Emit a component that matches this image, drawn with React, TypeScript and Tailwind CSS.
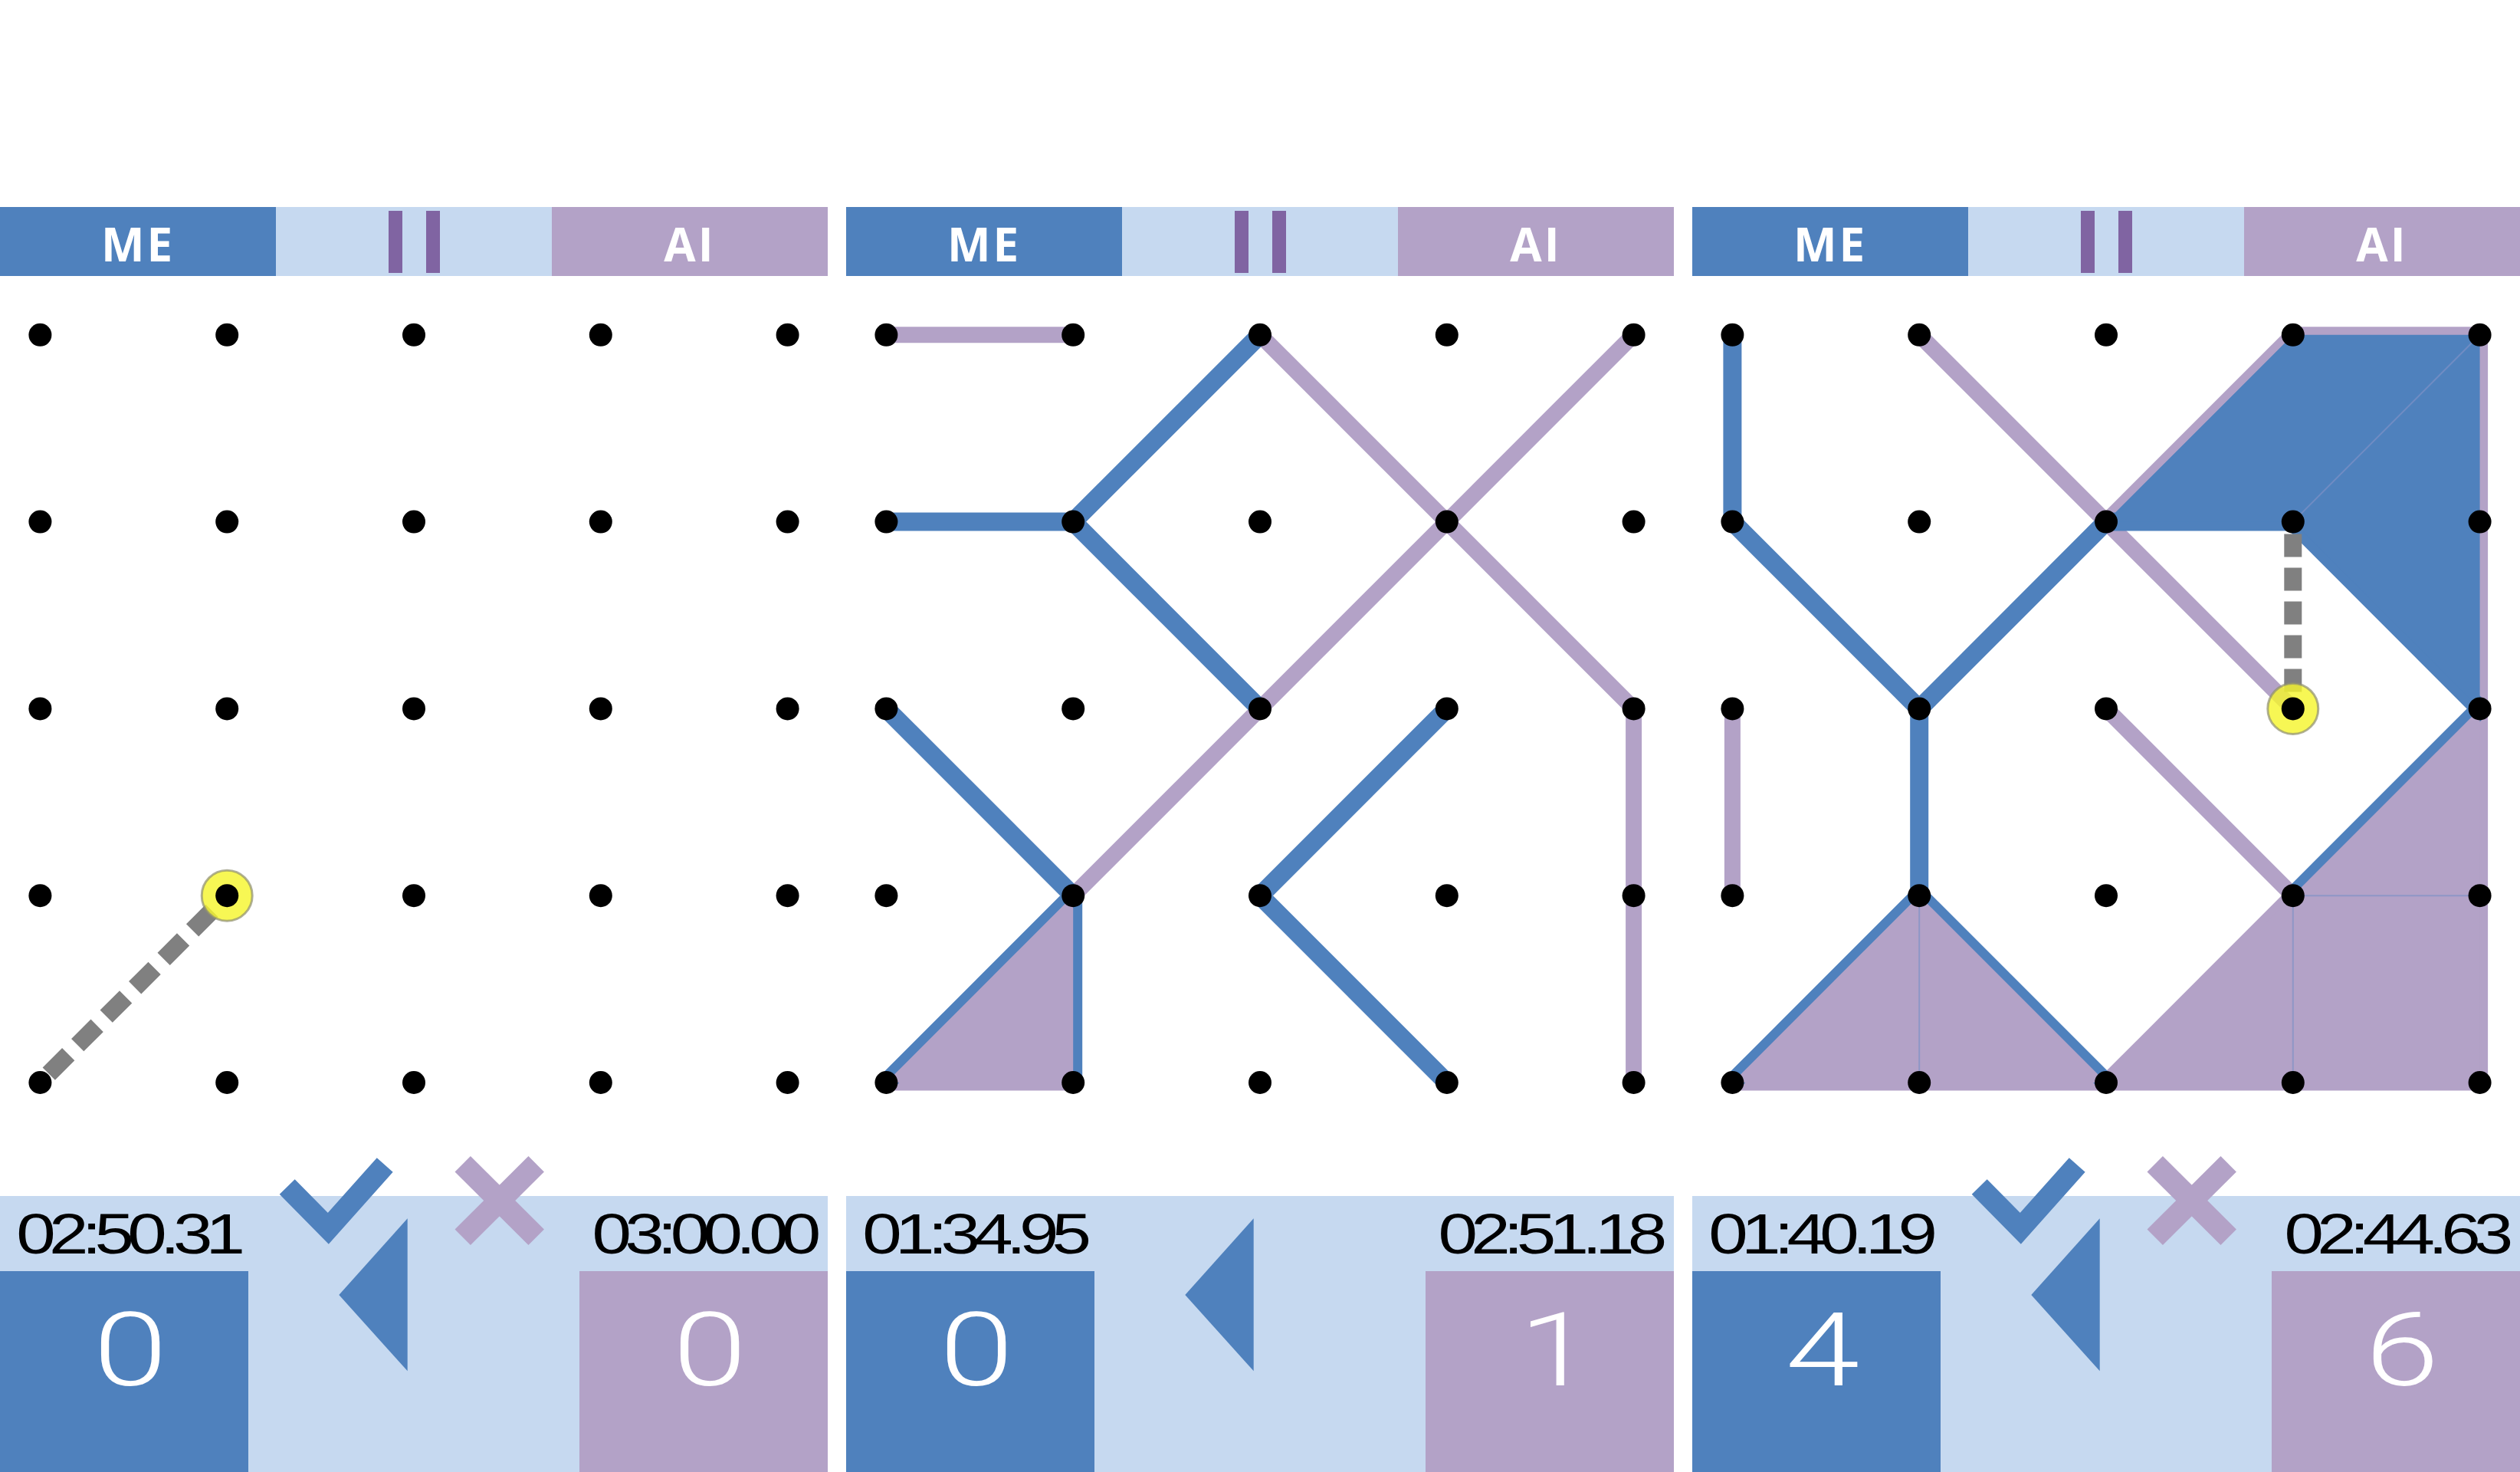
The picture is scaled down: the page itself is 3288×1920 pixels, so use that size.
import React from "react";

const BLUE = "#4f81bd";
const PURPLE = "#b3a2c7";

type Seg = [number, number, number, number];
type Pt = [number, number];

interface IBoard {
  purple: Seg[];
  blue: Seg[];
  fills: { pts: Pt[]; color: string }[];
  seams: Seg[];
  dash?: Seg;
  dashPattern?: string;
  mark?: Pt;
}

interface IPanel {
  board: IBoard;
  myTime: string;
  aiTime: string;
  myScore: number;
  aiScore: number;
  showActions: boolean;
}

const gx = (i: number) => 52.4 + 243.8 * i;
const gy = (j: number) => 76.8 + 243.8 * j;

const panels: IPanel[] = [
  {
    board: {
      purple: [],
      blue: [],
      fills: [],
      seams: [],
      dash: [0, 4, 1, 3],
      dashPattern: "36 17",
      mark: [1, 3],
    },
    myTime: "02:50.31",
    aiTime: "03:00.00",
    myScore: 0,
    aiScore: 0,
    showActions: true,
  },
  {
    board: {
      purple: [
        [0, 0, 1, 0],
        [2, 0, 3, 1],
        [3, 1, 4, 2],
        [4, 0, 3, 1],
        [3, 1, 2, 2],
        [2, 2, 1, 3],
        [4, 2, 4, 3],
        [4, 3, 4, 4],
        [0, 4, 1, 4],
      ],
      blue: [
        [0, 1, 1, 1],
        [1, 1, 2, 0],
        [1, 1, 2, 2],
        [0, 2, 1, 3],
        [1, 3, 0, 4],
        [1, 3, 1, 4],
        [3, 2, 2, 3],
        [2, 3, 3, 4],
      ],
      fills: [{ pts: [[0, 4], [1, 3], [1, 4]], color: PURPLE }],
      seams: [],
    },
    myTime: "01:34.95",
    aiTime: "02:51.18",
    myScore: 0,
    aiScore: 1,
    showActions: false,
  },
  {
    board: {
      purple: [
        [1, 0, 2, 1],
        [2, 1, 3, 2],
        [2, 1, 3, 0],
        [3, 0, 4, 0],
        [4, 0, 4, 2],
        [4, 2, 4, 4],
        [0, 2, 0, 3],
        [2, 2, 3, 3],
        [0, 4, 2, 4],
        [2, 4, 4, 4],
        [2, 4, 3, 3],
      ],
      blue: [
        [0, 0, 0, 1],
        [0, 1, 1, 2],
        [1, 2, 2, 1],
        [1, 2, 1, 3],
        [1, 3, 0, 4],
        [1, 3, 2, 4],
        [3, 3, 4, 2],
        [2, 1, 3, 1],
        [3, 1, 4, 2],
      ],
      fills: [
        { pts: [[2, 1], [3, 0], [4, 0], [4, 2], [3, 1]], color: BLUE },
        { pts: [[0, 4], [1, 3], [2, 4]], color: PURPLE },
        { pts: [[2, 4], [3, 3], [4, 2], [4, 4]], color: PURPLE },
      ],
      seams: [
        [3, 1, 4, 0],
        [1, 3, 1, 4],
        [3, 3, 4, 3],
        [3, 3, 3, 4],
      ],
      dash: [3, 1, 3, 2],
      dashPattern: "30 14",
      mark: [3, 2],
    },
    myTime: "01:40.19",
    aiTime: "02:44.63",
    myScore: 4,
    aiScore: 6,
    showActions: true,
  },
];

const Board = ({ board }: { board: IBoard }) => {
  const line = (s: Seg, color: string, width: number, key: string) => (
    <line
      key={key}
      x1={gx(s[0])}
      y1={gy(s[1])}
      x2={gx(s[2])}
      y2={gy(s[3])}
      stroke={color}
      strokeWidth={width}
    />
  );
  const dots = [];
  for (let j = 0; j < 5; j++) {
    for (let i = 0; i < 5; i++) {
      dots.push(<circle key={`d${i}-${j}`} cx={gx(i)} cy={gy(j)} r={15} fill="#000" />);
    }
  }
  return (
    <svg width="1080" height="1200" viewBox="0 0 1080 1200" className="block">
      {board.purple.map((s, i) => line(s, PURPLE, 21, `p${i}`))}
      {board.blue.map((s, i) => line(s, BLUE, 24, `b${i}`))}
      {board.fills.map((f, i) => (
        <polygon
          key={`f${i}`}
          points={f.pts.map(([i2, j2]) => `${gx(i2)},${gy(j2)}`).join(" ")}
          fill={f.color}
        />
      ))}
      {board.seams.map((s, i) => (
        <line
          key={`s${i}`}
          x1={gx(s[0])}
          y1={gy(s[1])}
          x2={gx(s[2])}
          y2={gy(s[3])}
          stroke="#7f92c6"
          strokeOpacity={0.7}
          strokeWidth={2}
        />
      ))}
      {board.dash && (
        <line
          x1={gx(board.dash[0])}
          y1={gy(board.dash[1])}
          x2={gx(board.dash[2])}
          y2={gy(board.dash[3])}
          stroke="#808080"
          strokeWidth={23}
          strokeDasharray={board.dashPattern}
          strokeDashoffset={-16}
        />
      )}
      {board.mark && (
        <circle
          cx={gx(board.mark[0])}
          cy={gy(board.mark[1])}
          r={33}
          fill="#f5f52e"
          fillOpacity={0.82}
          stroke="#8f8f70"
          strokeOpacity={0.7}
          strokeWidth={3}
        />
      )}
      {dots}
    </svg>
  );
};

const TurnIcons = ({ showActions }: { showActions: boolean }) => (
  <svg
    width="1080"
    height="300"
    viewBox="0 -60 1080 300"
    className="absolute left-0 top-[-60px] pointer-events-none"
  >
    {showActions && (
      <>
        <polyline
          points="374.7,-12 428.3,42.3 502.2,-40.5"
          fill="none"
          stroke={BLUE}
          strokeWidth={28}
          strokeLinejoin="miter"
        />
        <line x1="603.7" y1="-41.7" x2="699.7" y2="53.7" stroke={PURPLE} strokeWidth={29} />
        <line x1="699.7" y1="-41.7" x2="603.7" y2="53.7" stroke={PURPLE} strokeWidth={29} />
      </>
    )}
    <polygon points="531.7,29.3 531.7,228.3 442.3,129" fill={BLUE} />
  </svg>
);

const Panel = ({ panel }: { panel: IPanel }) => (
  <div className="w-[1080px] shrink-0 flex flex-col pt-[270px]">
    <div className="grid grid-cols-3 h-[90px] font-['Open_Sans',sans-serif] font-bold text-white text-[60px] leading-none">
      <div className="bg-[#4f81bd] flex items-center justify-center pt-[6px] tracking-[3px]">ME</div>
      <div className="bg-[#c6d9f0] flex items-center justify-center gap-[31px]">
        <div className="w-[18px] h-[81px] bg-[#8064a2]" />
        <div className="w-[18px] h-[81px] bg-[#8064a2]" />
      </div>
      <div className="bg-[#b3a2c7] flex items-center justify-center pt-[6px] tracking-[3px]">AI</div>
    </div>
    <div className="h-[1200px]">
      <Board board={panel.board} />
    </div>
    <div className="relative h-[360px] bg-[#c6d9f0] flex flex-col font-['Liberation_Sans',Arial,sans-serif]">
      <div className="h-[98px] flex justify-between items-start text-black text-[74px] leading-none tracking-[-7px]">
        <div className="pl-[17px] pt-[13px] origin-left scale-x-125">{panel.myTime}</div>
        <div className="pr-[14px] pt-[13px] origin-right scale-x-125">{panel.aiTime}</div>
      </div>
      <div className="flex-1 flex justify-between text-white text-[134px] leading-none font-['Roboto',sans-serif] font-light">
        <div className="w-[324px] bg-[#4f81bd] flex justify-center pt-[37px] pl-[16px]">
          <span className="scale-x-[1.3]">{panel.myScore}</span>
        </div>
        <div className="w-[324px] bg-[#b3a2c7] flex justify-center pt-[37px] pl-[16px]">
          <span className="scale-x-[1.3]">{panel.aiScore}</span>
        </div>
      </div>
      <TurnIcons showActions={panel.showActions} />
    </div>
  </div>
);

export default function App() {
  return (
    <div className="w-[3288px] h-[1920px] bg-white flex gap-[24px] overflow-hidden">
      {panels.map((p, i) => (
        <Panel key={i} panel={p} />
      ))}
    </div>
  );
}
